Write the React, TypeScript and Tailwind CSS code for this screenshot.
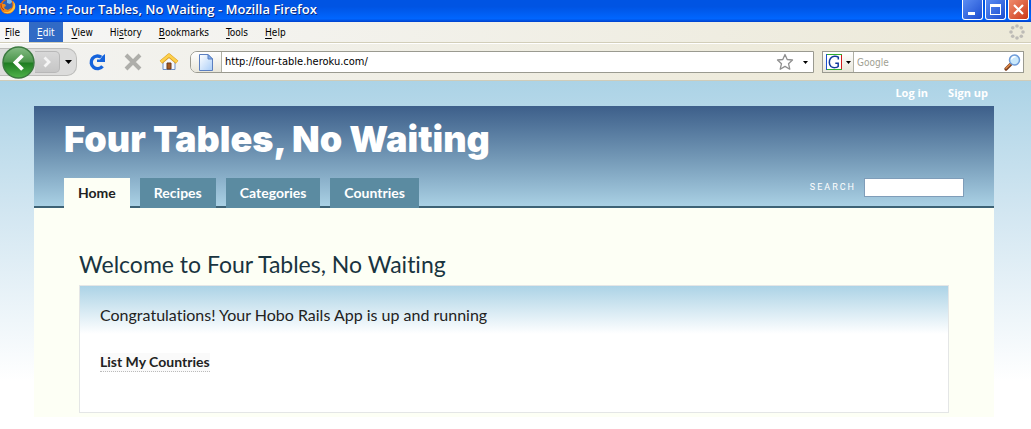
import React from "react";

const menus = [
  { before: "", key: "F", after: "ile" },
  { before: "", key: "E", after: "dit", active: true },
  { before: "", key: "V", after: "iew" },
  { before: "Hi", key: "s", after: "tory" },
  { before: "", key: "B", after: "ookmarks" },
  { before: "", key: "T", after: "ools" },
  { before: "", key: "H", after: "elp" },
];

const tabs = ["Home", "Recipes", "Categories", "Countries"];

function FirefoxIcon() {
  return (
    <svg width="16" height="16" viewBox="0 0 16 16" aria-hidden="true">
      <circle cx="7.500" cy="6.500" r="7.500" fill="#e66a10" />
      <circle cx="7.500" cy="5" r="5" fill="#2c62b8" />
      <path d="M7 0c2-1 5 0 5 2l-2 2-3-1z" fill="#7db8ee" />
      <path d="M0 3l2 1 3 0 1 2-2 1 1 2 3 1 3-2c0 3-3 4-5 4-4 0-6-4-6-9z" fill="#f08a1c" />
      <path d="M13 1c3 3 3 8 0 10-3 3-8 3-11 0 3 2 7 1 9-1 3-3 3-6 2-9z" fill="#fbc63c" />
      <path d="M1 4c0 3 1 5 3 6" stroke="#b8320c" fill="none" />
    </svg>
  );
}

function BackIcon() {
  return (
    <svg width="33" height="33" viewBox="0 0 33 33" aria-hidden="true">
      <defs>
        <linearGradient id="back" x1="0" y1="0" x2="0" y2="1">
          <stop offset="0" stopColor="#86bd86" />
          <stop offset="0.48" stopColor="#4a954a" />
          <stop offset="0.52" stopColor="#1f7d22" />
          <stop offset="1" stopColor="#4fb34a" />
        </linearGradient>
      </defs>
      <circle cx="16.500" cy="16.500" r="15.500" fill="url(#back)" stroke="#3c7a40" strokeWidth="1.500" />
      <path d="M20.500 9.500l-7 7 7 7" fill="none" stroke="#fff" strokeWidth="3.800" />
    </svg>
  );
}

function ReloadIcon() {
  return (
    <svg width="18" height="18" viewBox="0 0 18 18" aria-hidden="true">
      <path d="M14.500 13.200A6.300 6.300 0 1 1 13.200 4.200" fill="none" stroke="#1463dc" strokeWidth="3.400" />
      <path d="M17 1v8H9V6.500h3L14.500 3z" fill="#1463dc" />
    </svg>
  );
}

function HomeIcon() {
  return (
    <svg width="20" height="18" viewBox="0 0 20 18" aria-hidden="true">
      <path d="M4 8v8.500h12V8l-6-5z" fill="#f4f7fd" stroke="#6d8fc4" />
      <path d="M8 10h4v6H8z" fill="#a55a22" stroke="#6b3a1a" />
      <path d="M2 9.200L10 2.400l8 6.800" fill="none" stroke="#d9981c" strokeWidth="4" strokeLinejoin="round" />
      <path d="M2 9L10 2.200l8 6.800" fill="none" stroke="#fcd04c" strokeWidth="2.800" strokeLinejoin="round" />
    </svg>
  );
}

function PageIcon() {
  return (
    <svg width="14" height="17" viewBox="0 0 14 17" aria-hidden="true">
      <defs>
        <linearGradient id="page" x1="0" y1="0" x2="1" y2="1">
          <stop offset="0" stopColor="#fff" />
          <stop offset="1" stopColor="#a9cdf8" />
        </linearGradient>
      </defs>
      <path d="M.5.5h8.500l4.500 4.500v11.500H.5z" fill="url(#page)" stroke="#5b7fc0" />
      <path d="M9 .5V5h4.500z" fill="#82b0ee" stroke="#5b7fc0" />
    </svg>
  );
}

function StarIcon() {
  return (
    <svg width="18" height="18" viewBox="0 0 18 18" aria-hidden="true">
      <path
        d="M9 1.500l2.200 5 5.300.5-4 3.700 1.300 5.500L9 13.400l-4.800 2.800 1.300-5.500-4-3.700 5.300-.5z"
        fill="#fff"
        stroke="#8f8f8f"
        strokeWidth="1.300"
        strokeLinejoin="round"
      />
    </svg>
  );
}

function Arrow() {
  return (
    <svg width="7" height="4" viewBox="0 0 7 4" aria-hidden="true">
      <path d="M0 0h7L3.500 4z" fill="#000" />
    </svg>
  );
}

function SmallArrow() {
  return (
    <svg width="5" height="3" viewBox="0 0 5 3" aria-hidden="true">
      <path d="M0 0h5L2.500 3z" fill="#000" />
    </svg>
  );
}

function GoogleIcon() {
  return (
    <svg width="16" height="16" viewBox="0 0 16 16" aria-hidden="true">
      <path d="M0 0h16v16H0z" fill="#fff" />
      <path d="M0 .5h16M0 15.500h16" stroke="#2fae2f" />
      <path d="M.5 0v16" stroke="#1c4fd0" />
      <path d="M15.500 1v14" stroke="#d01c1c" />
      <path d="M12.300 5.500V3.200C10 1.700 6.500 2 4.600 4.300 2.700 6.800 3 10.700 5 12.500c2.200 1.700 5.700 1.300 7.200 0V9.300H9.300" fill="none" stroke="#123a9c" strokeWidth="1.500" />
    </svg>
  );
}

function MagnifierIcon() {
  return (
    <svg width="17" height="17" viewBox="0 0 17 17" aria-hidden="true">
      <path d="M6.500 10.500L2 15" stroke="#7a3d1c" strokeWidth="3.200" strokeLinecap="round" />
      <path d="M6 10.500L2 14.300" stroke="#e08a48" strokeWidth="1.500" strokeLinecap="round" />
      <circle cx="10.500" cy="6" r="5" fill="#c9e8fb" stroke="#6e9bd8" strokeWidth="1.500" />
      <path d="M7.500 5.500a3 3 0 0 1 4-2.500" stroke="#fff" strokeWidth="1.500" fill="none" />
    </svg>
  );
}

function Throbber() {
  return (
    <svg width="16" height="16" viewBox="0 0 16 16" fill="#bdbbb6" aria-hidden="true">
      <circle cx="8" cy="2" r="1.800" />
      <circle cx="12.300" cy="3.700" r="1.800" />
      <circle cx="14" cy="8" r="1.800" />
      <circle cx="12.300" cy="12.300" r="1.800" />
      <circle cx="8" cy="14" r="1.800" />
      <circle cx="3.700" cy="12.300" r="1.800" />
      <circle cx="2" cy="8" r="1.800" />
      <circle cx="3.700" cy="3.700" r="1.800" />
    </svg>
  );
}

function TitleBar() {
  const button = "flex h-5 w-[21px] items-center justify-center rounded-b-[3px] border border-t-0 border-white";
  const blue = "bg-linear-to-br from-[#5b8cf2] to-[#1c4bd0]";
  return (
    <header className="flex h-[22px] items-start justify-between bg-linear-to-b from-[#0054e3] from-30% via-[#0066ff] via-85% to-[#0040cc]">
      <div className="flex items-start gap-[2px]">
        <FirefoxIcon />
        <h1 className="text-[13px] leading-[19px] font-semibold whitespace-nowrap text-white [text-shadow:1px_1px_0_#0a2a80]">
          Home : Four Tables, No Waiting - Mozilla Firefox
        </h1>
      </div>
      <div className="flex gap-[2px] pr-[2px]">
        <button aria-label="Minimize" className={button + " " + blue}>
          <svg width="13" height="13" viewBox="0 0 13 13">
            <path d="M2 9h7v3H2z" fill="#fff" />
          </svg>
        </button>
        <button aria-label="Maximize" className={button + " " + blue}>
          <svg width="13" height="13" viewBox="0 0 13 13">
            <path d="M1 1h11v11H1zM2 4v7h9V4z" fill="#fff" fillRule="evenodd" />
          </svg>
        </button>
        <button aria-label="Close" className={button + " bg-linear-to-br from-[#ee8a6c] to-[#cc3510]"}>
          <svg width="13" height="13" viewBox="0 0 13 13">
            <path d="M2 2l9 9M11 2l-9 9" stroke="#fff" strokeWidth="2.200" />
          </svg>
        </button>
      </div>
    </header>
  );
}

function MenuBar() {
  return (
    <div className="flex h-[21px] items-start justify-between border-b border-[#d2ceb9] bg-linear-to-r from-[#f6f6f6] to-[#ece9d8] pr-[6px] font-['DejaVu_Sans_Condensed','DejaVu_Sans',sans-serif] text-[10px]">
      <nav className="flex">
        {menus.map((m) => (
          <button
            key={m.key + m.after}
            className={
              m.active
                ? "h-5 bg-[#316ac5] pr-[9px] pl-2 text-white"
                : "h-5 pr-[9px] pl-2 text-black first:pl-[5px]"
            }
          >
            {m.before}
            <span className="underline underline-offset-2">{m.key}</span>
            {m.after}
          </button>
        ))}
      </nav>
      <div className="pt-[2px]">
        <Throbber />
      </div>
    </div>
  );
}

function Toolbar() {
  return (
    <div className="flex h-[38px] items-center border-t border-b border-t-white border-b-[#d0ccb8] bg-linear-to-r from-[#f3f3f1] to-[#ece8d4] pr-[7px] font-['DejaVu_Sans_Condensed','DejaVu_Sans',sans-serif] text-[11px]">
      <div className="flex h-7 w-[77px] shrink-0 items-center rounded-r-[10px] border border-l-0 border-[#bdbdbb] bg-[#dcdcdb] pl-[2px]">
        <button aria-label="Back" className="-my-1">
          <BackIcon />
        </button>
        <button
          aria-label="Forward"
          className="flex h-[22px] w-[25px] items-center justify-center rounded-r-[5px] border border-l-0 border-[#b8b8b8] bg-linear-to-b from-[#d8d8d8] to-[#c6c6c6]"
        >
          <svg width="9" height="12" viewBox="0 0 9 12">
            <path d="M1.500 1.500L6 6l-4.500 4.500" stroke="#f5f5f5" strokeWidth="2.800" fill="none" />
          </svg>
        </button>
        <button aria-label="History list" className="ml-[5px]">
          <Arrow />
        </button>
      </div>
      <button aria-label="Reload" className="ml-[11px]">
        <ReloadIcon />
      </button>
      <button aria-label="Stop" className="ml-[18px]">
        <svg width="18" height="18" viewBox="0 0 18 18">
          <path d="M2 2l14 14M16 2L2 16" stroke="#aeaeaa" strokeWidth="4" />
        </svg>
      </button>
      <button aria-label="Home page" className="ml-[17px]">
        <HomeIcon />
      </button>
      <div className="ml-[11px] flex h-[22px] min-w-0 flex-1 items-center rounded-l-[7px] border border-[#9a9a90] bg-white">
        <span className="flex h-full w-[31px] shrink-0 items-center justify-center rounded-l-[6px] border-r border-[#b0b0a4] bg-linear-to-b from-white to-[#e8e6da]">
          <PageIcon />
        </span>
        <input
          aria-label="Address"
          defaultValue="http://four-table.heroku.com/"
          className="min-w-0 flex-1 bg-transparent pl-[3px] text-black outline-none"
        />
        <button aria-label="Bookmark this page">
          <StarIcon />
        </button>
        <button aria-label="Address history" className="mr-[5px] ml-[9px]">
          <SmallArrow />
        </button>
      </div>
      <div className="ml-2 flex h-[22px] w-[202px] shrink-0 items-center border border-[#9a9a90] bg-white">
        <button
          aria-label="Search engine"
          className="flex h-full w-[31px] shrink-0 items-center gap-1 border-r border-[#b0b0a4] bg-linear-to-b from-white to-[#e8e6da] pl-[3px]"
        >
          <GoogleIcon />
          <SmallArrow />
        </button>
        <input
          aria-label="Search the web"
          placeholder="Google"
          className="min-w-0 flex-1 bg-transparent pl-[3px] text-[10px] outline-none placeholder:text-[#9f9f92]"
        />
        <button aria-label="Go" className="mr-[2px]">
          <MagnifierIcon />
        </button>
      </div>
    </div>
  );
}

export default function App() {
  return (
    <div className="flex min-h-screen flex-col bg-white font-['Open_Sans','Noto_Sans',sans-serif]">
      <TitleBar />
      <MenuBar />
      <Toolbar />
      <div className="flex-1 bg-linear-to-b from-[#acd3e6] via-[#d2e6f1] via-[130px] to-white to-[300px] pr-[37px] pb-3 pl-[34px] font-['Lato','Open_Sans',sans-serif] [font-variant-ligatures:none]">
        <nav className="flex h-[25px] items-center justify-end gap-5 pr-[6px] font-['Open_Sans',sans-serif] text-[11px] font-bold text-white">
          <a href="#login">Log in</a>
          <a href="#signup">Sign up</a>
        </nav>
        <div className="bg-[#fdfff5]">
          <header className="bg-linear-to-b from-[#3d5f8a] via-[#7297b5] via-50% to-[#acd3e6] px-[30px] shadow-[inset_0_-2px_0_#3d6275]">
            <h2 className="h-[72px] pt-[11px] font-['Inter','Liberation_Sans',sans-serif] text-[36px] leading-[44px] font-black whitespace-nowrap text-white">
              Four Tables, No Waiting
            </h2>
            <div className="flex items-start justify-between">
              <nav className="flex gap-[10px] text-[14px] leading-[30px] font-bold">
                {tabs.map((t, i) => (
                  <a
                    key={t}
                    href={"#" + t.toLowerCase()}
                    className={
                      i === 0
                        ? "bg-[#fdfff5] px-[14px] text-[#222]"
                        : "bg-[#5b8ba1] px-[14px] text-white"
                    }
                  >
                    {t}
                  </a>
                ))}
              </nav>
              <form className="flex items-center gap-2">
                <label htmlFor="site-search" className="font-['Roboto',sans-serif] text-[9px] tracking-[2px] text-white">
                  SEARCH
                </label>
                <input id="site-search" className="h-[19px] w-[100px] border border-[#7f9db9] bg-white px-1 text-[11px]" />
              </form>
            </div>
          </header>
          <main className="px-[45px] pt-[41px] pb-1">
            <h3 className="text-[23px] leading-[30px] whitespace-nowrap text-[#193440]">Welcome to Four Tables, No Waiting</h3>
            <section className="mt-[6px] border border-[#e4e6e6] bg-white bg-linear-to-b from-[#acd3e6] to-white to-[48px] px-5 pt-[18px] pb-10">
              <p className="text-[16px] leading-[22px] text-[#222]">Congratulations! Your Hobo Rails App is up and running</p>
              <p className="mt-[27px] text-[14px] leading-[18px] font-bold">
                <a href="#countries" className="inline-block border-b border-dotted border-[#bbb] bg-[#fafafa] text-[#222]">
                  List My Countries
                </a>
              </p>
            </section>
          </main>
        </div>
      </div>
    </div>
  );
}
